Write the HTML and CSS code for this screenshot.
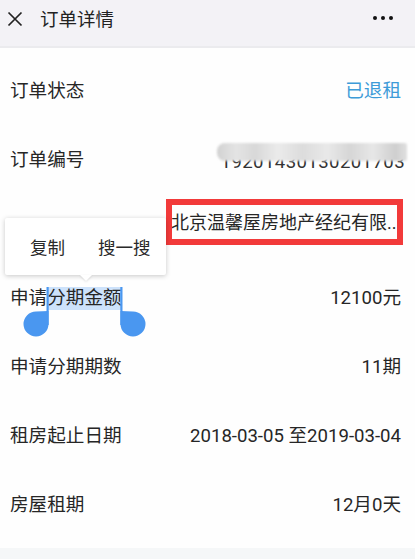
FILE: index.html
```html
<!DOCTYPE html>
<html lang="zh">
<head>
<meta charset="utf-8">
<title>订单详情</title>
<link rel="stylesheet" href="styles.css">
</head>
<body>
<header class="topbar">
  <svg class="close" width="16" height="16" viewBox="0 0 16 16"><path d="M1.5 1.5 L14.5 14.5 M14.5 1.5 L1.5 14.5" stroke="#222" stroke-width="1.7" fill="none"/></svg>
  <span class="title">订单详情</span>
  <svg class="more" width="24" height="6" viewBox="0 0 24 6"><circle cx="3" cy="3" r="2" fill="#111"/><circle cx="11" cy="3" r="2" fill="#111"/><circle cx="19" cy="3" r="2" fill="#111"/></svg>
</header>
<main class="card">
  <div class="row"><span class="label">订单状态</span><span class="value status">已退租</span></div>
  <div class="row"><span class="label">订单编号</span><span class="value masked">19201430130201703<span class="blur"></span></span></div>
  <div class="row"><span class="label"></span><span class="value boxed">北京温馨屋房地产经纪有限..</span></div>
  <div class="row"><span class="label">申请<span class="sel">分期金额<svg class="handle left" width="27" height="50" viewBox="0 0 27 50"><rect x="24.5" y="0" width="2.2" height="38" fill="#4a97f0"/><path d="M26.5 24 V37 A12.5 12.5 0 1 1 14 24.5 Z" fill="#4a97f0"/></svg><svg class="handle right" width="27" height="50" viewBox="0 0 27 50"><rect x="0.3" y="0" width="2.2" height="38" fill="#4a97f0"/><path d="M0.5 24 V37 A12.5 12.5 0 1 0 13 24.5 Z" fill="#4a97f0"/></svg></span></span><span class="value">12100元</span></div>
  <div class="row"><span class="label">申请分期期数</span><span class="value">11期</span></div>
  <div class="row"><span class="label">租房起止日期</span><span class="value">2018-03-05 至2019-03-04</span></div>
  <div class="row"><span class="label">房屋租期</span><span class="value">12月0天</span></div>
  <div class="popup"><span>复制</span><span>搜一搜</span></div>
</main>
</body>
</html>
```
FILE: styles.css
```css
* { box-sizing: border-box; }
html, body { margin: 0; padding: 0; }
body {
  background: #f5f7f8;
  font-family: Roboto, "Noto Sans CJK SC", sans-serif;
  color: #262626;
  width: 415px;
  height: 559px;
  overflow: hidden;
}
.topbar {
  height: 46px;
  background: #f3f2f6;
  display: flex;
  align-items: center;
  padding: 0 19px 0 7px;
  border-bottom: 2px solid #ebebee;
  box-sizing: content-box;
}
.close { margin-top: -9px; margin-right: 17px; }
.title { font-size: 18.5px; color: #222; flex: 1; margin-top: -10px; }
.more { margin-top: -11px; }
.card {
  background: #fefefe;
  padding: 6px 0 11px;
  position: relative;
}
.row {
  height: 69px;
  display: flex;
  align-items: center;
  justify-content: space-between;
  padding: 0 14px 0 10px;
  font-size: 18.6px;
}
.label { color: #262626; position: relative; }
.value { color: #262626; }
.status { color: #3d9bd8; }
.masked {
  position: relative;
  letter-spacing: 0.4px;
  color: #333;
  margin-top: 8px;
  margin-right: -4px;
}
.blur {
  position: absolute;
  left: -4px;
  right: -2px;
  top: -8px;
  height: 18px;
  border-radius: 8px 2px 2px 8px;
  background: linear-gradient(90deg, #d2d2d2 0%, #e4e4e4 10%, #d8d8d8 20%, #ebebeb 32%, #dcdcdc 45%, #e9e9e9 58%, #d6d6d6 70%, #e7e7e7 82%, #cfcfcf 94%, #e0e0e0 100%);
  filter: blur(1.2px);
}
.boxed {
  width: 237px;
  height: 46px;
  border: 6px solid #f23a3a;
  margin-right: -2px;
  margin-bottom: 10px;
  padding-top: 3px;
  line-height: 30px;
  font-size: 18px;
  white-space: nowrap;
  overflow: hidden;
  text-indent: -1px;
}
.sel {
  position: relative;
  display: inline-block;
  background: #cde2fb;
  line-height: 23px;
}
.handle { position: absolute; top: 0; }
.handle.left { left: -25px; }
.handle.right { right: -25px; }
.popup {
  position: absolute;
  left: 5px;
  top: 170px;
  width: 161px;
  height: 57px;
  background: #fff;
  box-shadow: 0 1px 5px rgba(0,0,0,0.22);
  display: flex;
  align-items: center;
  gap: 33px;
  padding-left: 25px;
  font-size: 17.5px;
  color: #2a2a2a;
  border-radius: 2px;
}
.popup::after {
  content: "";
  position: absolute;
  left: 75px;
  bottom: -6px;
  width: 0;
  height: 0;
  border-left: 6px solid transparent;
  border-right: 6px solid transparent;
  border-top: 6px solid #fff;
  filter: drop-shadow(0 1px 1px rgba(0,0,0,0.12));
}
```
